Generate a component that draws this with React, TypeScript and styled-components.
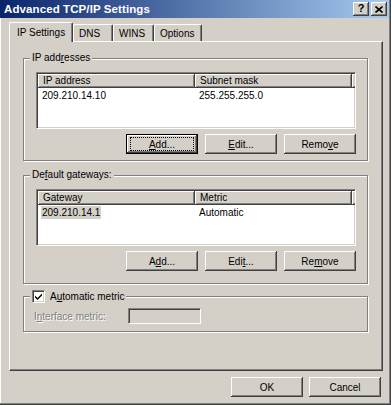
import React from "react";
import styled, { createGlobalStyle } from "styled-components";

const GlobalStyle = createGlobalStyle`
  body {
    margin: 0;
    background: #fff;
    font-family: "Liberation Sans", Arial, sans-serif;
    font-size: 10px;
  }
  * {
    box-sizing: border-box;
  }
`;

const ipRows = [{ address: "209.210.14.10", mask: "255.255.255.0" }];
const gatewayRows = [{ gateway: "209.210.14.1", metric: "Automatic" }];

export default function App() {
  return (
    <>
      <GlobalStyle />
      <Window>
        <TitleBar>
          <Title>Advanced TCP/IP Settings</Title>
          <CaptionButtons>
            <CaptionButton>
              <HelpGlyph>?</HelpGlyph>
            </CaptionButton>
            <CaptionButton>
              <svg width="8" height="7" viewBox="0 0 8 7">
                <path d="M0.5 0.5 L7.5 6.5 M7.5 0.5 L0.5 6.5" stroke="#000" strokeWidth="1.6" />
              </svg>
            </CaptionButton>
          </CaptionButtons>
        </TitleBar>

        <Body>
          <TabStrip>
            <Tab $active $width={64}>IP Settings</Tab>
            <Tab $width={40}>DNS</Tab>
            <Tab $width={41}>WINS</Tab>
            <Tab $width={48}>Options</Tab>
          </TabStrip>

          <TabPanel>
            <Group $bottom={6}>
              <Legend>
                IP add<U>r</U>esses
              </Legend>
              <ListView>
                <Header>
                  <HeaderCell $width={157}>IP address</HeaderCell>
                  <HeaderCell $width={157}>Subnet mask</HeaderCell>
                  <HeaderFill />
                </Header>
                {ipRows.map((r) => (
                  <Row key={r.address}>
                    <Cell $width={157}>{r.address}</Cell>
                    <Cell $width={157}>{r.mask}</Cell>
                  </Row>
                ))}
              </ListView>
              <ButtonRow>
                <Button $default>
                  <Focus>
                    <U>A</U>dd...
                  </Focus>
                </Button>
                <Button>
                  <U>E</U>dit...
                </Button>
                <Button>
                  Remo<U>v</U>e
                </Button>
              </ButtonRow>
            </Group>

            <Group $bottom={12} $top={8}>
              <Legend>
                De<U>f</U>ault gateways:
              </Legend>
              <ListView>
                <Header>
                  <HeaderCell $width={157}>Gateway</HeaderCell>
                  <HeaderCell $width={157}>Metric</HeaderCell>
                  <HeaderFill />
                </Header>
                {gatewayRows.map((r) => (
                  <Row key={r.gateway}>
                    <Cell $width={157}>
                      <Selected>{r.gateway}</Selected>
                    </Cell>
                    <Cell $width={157}>{r.metric}</Cell>
                  </Row>
                ))}
              </ListView>
              <ButtonRow>
                <Button>
                  A<U>d</U>d...
                </Button>
                <Button>
                  Edi<U>t</U>...
                </Button>
                <Button>
                  Re<U>m</U>ove
                </Button>
              </ButtonRow>
            </Group>

            <MetricGroup>
              <CheckLegend>
                <CheckBox>
                  <svg width="7" height="7" viewBox="0 0 7 7">
                    <path d="M0 2.5 L2.5 5 L7 0.5 L7 2.5 L2.5 7 L0 4.5 Z" fill="#000" />
                  </svg>
                </CheckBox>
                <span>
                  A<U>u</U>tomatic metric
                </span>
              </CheckLegend>
              <MetricRow>
                <DisabledLabel>
                  I<U>n</U>terface metric:
                </DisabledLabel>
                <DisabledField />
              </MetricRow>
            </MetricGroup>
          </TabPanel>

          <Footer>
            <Button>OK</Button>
            <Button>Cancel</Button>
          </Footer>
        </Body>
      </Window>
    </>
  );
}

// style
const Window = styled.div`
  width: 391px;
  height: 405px;
  background: #d4d0c8;
  border-right: 1px solid #404040;
  border-bottom: 1px solid #404040;
  box-shadow: inset -1px -1px 0 #808080;
  padding: 0 1px 1px 0;
  display: flex;
  flex-direction: column;
`;

const TitleBar = styled.div`
  height: 18px;
  flex-shrink: 0;
  display: flex;
  align-items: center;
  justify-content: space-between;
  padding: 0 2px 0 4px;
  background: linear-gradient(to right, #0a246a, #a6caf0);
`;

const Title = styled.span`
  color: #fff;
  font-weight: 700;
  font-size: 11.5px;
  letter-spacing: 0.1px;
`;

const CaptionButtons = styled.div`
  display: flex;
  gap: 2px;
`;

const CaptionButton = styled.div`
  width: 16px;
  height: 14px;
  display: flex;
  align-items: center;
  justify-content: center;
  background: #d4d0c8;
  box-shadow: inset -1px -1px 0 #404040, inset 1px 1px 0 #fff,
    inset -2px -2px 0 #808080;
`;

const HelpGlyph = styled.span`
  font-weight: 700;
  font-size: 11px;
  line-height: 1;
  margin-top: -1px;
`;

const Body = styled.div`
  flex: 1;
  display: flex;
  flex-direction: column;
  padding: 4px 0 6px 9px;
  box-shadow: inset 1px 0 0 #fff;
`;

const TabStrip = styled.div`
  display: flex;
  align-items: flex-end;
  height: 19px;
  position: relative;
  z-index: 1;
`;

const Tab = styled.div<{ $active?: boolean; $width: number }>`
  width: ${(p) => p.$width}px;
  height: ${(p) => (p.$active ? 20 : 17)}px;
  margin-bottom: ${(p) => (p.$active ? -1 : 0)}px;
  padding-left: ${(p) => (p.$active ? 7 : 5)}px;
  padding-bottom: ${(p) => (p.$active ? 1 : 0)}px;
  display: flex;
  align-items: center;
  background: #d4d0c8;
  border-top: 1px solid #fff;
  border-left: 1px solid #fff;
  border-right: 1px solid #404040;
  box-shadow: inset -1px 0 0 #808080;
  border-radius: 2px 2px 0 0;
  white-space: nowrap;
`;

const TabPanel = styled.div`
  width: 374px;
  height: 330px;
  display: flex;
  flex-direction: column;
  padding: 10px 14px 0 13px;
  border: 1px solid;
  border-color: #fff #404040 #404040 #fff;
  box-shadow: inset -1px -1px 0 #808080;
`;

const Group = styled.fieldset<{ $bottom: number; $top?: number }>`
  margin: ${(p) => p.$top ?? 0}px 0 0 0;
  padding: 8px 11px ${(p) => p.$bottom}px 12px;
  border: 1px solid #808080;
  box-shadow: inset 1px 1px 0 #fff, 1px 1px 0 #fff;
  min-width: 0;
`;

const Legend = styled.legend`
  padding: 0 2px;
  margin-left: -6px;
  line-height: 12px;
  background: #d4d0c8;
`;

const U = styled.span`
  text-decoration: underline;
`;

const ListView = styled.div`
  height: 57px;
  background: #fff;
  border: 1px solid;
  border-color: #808080 #fff #fff #808080;
  box-shadow: inset 1px 1px 0 #404040, inset -1px -1px 0 #d4d0c8;
  padding: 1px;
  overflow: hidden;
`;

const Header = styled.div`
  display: flex;
  height: 14px;
`;

const HeaderCell = styled.div<{ $width: number }>`
  width: ${(p) => p.$width}px;
  flex-shrink: 0;
  padding: 1px 0 0 5px;
  line-height: 12px;
  background: #d4d0c8;
  box-shadow: inset -1px -1px 0 #404040, inset 1px 1px 0 #fff,
    inset -2px -2px 0 #808080;
  white-space: nowrap;
`;

const HeaderFill = styled(HeaderCell).attrs({ $width: 0 })`
  flex: 1;
  width: auto;
`;

const Row = styled.div`
  display: flex;
  height: 14px;
  align-items: center;
`;

const Cell = styled.div<{ $width: number }>`
  width: ${(p) => p.$width}px;
  padding-left: 4px;
  white-space: nowrap;
`;

const Selected = styled.span`
  background: #d4d0c8;
  padding: 1px 1px;
  margin-left: -1px;
`;

const ButtonRow = styled.div`
  display: flex;
  justify-content: flex-end;
  gap: 7px;
  margin-top: 5px;
`;

const Button = styled.button<{ $default?: boolean }>`
  width: 72px;
  height: 20px;
  padding: 0;
  display: flex;
  align-items: center;
  justify-content: center;
  font: inherit;
  color: #000;
  background: #d4d0c8;
  border: ${(p) => (p.$default ? "1px solid #000" : "none")};
  box-shadow: inset -1px -1px 0 #404040, inset 1px 1px 0 #fff,
    inset -2px -2px 0 #808080;
`;

const Focus = styled.span`
  width: 62px;
  height: 12px;
  display: flex;
  align-items: center;
  justify-content: center;
  outline: 1px dotted #000;
`;

const MetricGroup = styled.fieldset`
  margin: 6px 0 0 0;
  padding: 5px 11px 7px 10px;
  border: 1px solid #808080;
  box-shadow: inset 1px 1px 0 #fff, 1px 1px 0 #fff;
  min-width: 0;
`;

const CheckLegend = styled.legend`
  display: flex;
  align-items: center;
  gap: 5px;
  padding: 0 2px;
  margin-left: -4px;
  line-height: 13px;
  background: #d4d0c8;
`;

const CheckBox = styled.span`
  width: 13px;
  height: 13px;
  display: flex;
  align-items: center;
  justify-content: center;
  background: #fff;
  border: 1px solid;
  border-color: #808080 #fff #fff #808080;
  box-shadow: inset 1px 1px 0 #404040, inset -1px -1px 0 #d4d0c8;
`;

const MetricRow = styled.div`
  display: flex;
  align-items: center;
  height: 16px;
`;

const DisabledLabel = styled.span`
  width: 94px;
  color: #808080;
  text-shadow: 1px 1px 0 #fff;
`;

const DisabledField = styled.div`
  width: 73px;
  height: 16px;
  background: #d4d0c8;
  border: 1px solid;
  border-color: #808080 #fff #fff #808080;
  box-shadow: inset 1px 1px 0 #404040, inset -1px -1px 0 #d4d0c8;
`;

const Footer = styled.div`
  display: flex;
  justify-content: flex-end;
  gap: 6px;
  margin-top: 6px;
  padding-right: 8px;
`;
